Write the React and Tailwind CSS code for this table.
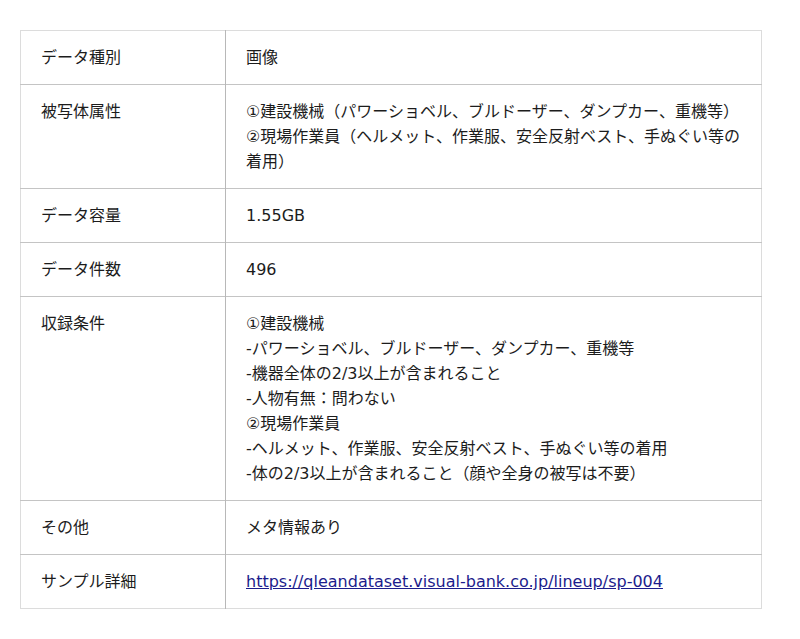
import React from "react";

const rows = [
  { label: "データ種別", value: ["画像"] },
  {
    label: "被写体属性",
    value: [
      "①建設機械（パワーショベル、ブルドーザー、ダンプカー、重機等）",
      "②現場作業員（ヘルメット、作業服、安全反射ベスト、手ぬぐい等の着用）",
    ],
  },
  { label: "データ容量", value: ["1.55GB"] },
  { label: "データ件数", value: ["496"] },
  {
    label: "収録条件",
    value: [
      "①建設機械",
      "-パワーショベル、ブルドーザー、ダンプカー、重機等",
      "-機器全体の2/3以上が含まれること",
      "-人物有無：問わない",
      "②現場作業員",
      "-ヘルメット、作業服、安全反射ベスト、手ぬぐい等の着用",
      "-体の2/3以上が含まれること（顔や全身の被写は不要）",
    ],
  },
  { label: "その他", value: ["メタ情報あり"] },
];

const App = () => {
  return (
    <div
      className="bg-white min-h-[639px] pt-[30px] pl-[20px] text-[#1c1c1c] text-[16px] leading-[25px]"
      style={{ fontFamily: '"DejaVu Sans", "Noto Sans CJK JP", sans-serif' }}
    >
      <table className="w-[742px] border-collapse border border-[#dcdcdc]">
        <tbody>
          {rows.map((row) => (
            <tr key={row.label} className="border-b border-[#c4c4c4]">
              <td className="w-[205px] align-top px-[20px] py-[14px] border-r border-[#b8b8b8]">
                {row.label}
              </td>
              <td className="align-top px-[20px] py-[14px]">
                {row.value.map((line, i) => (
                  <div key={i}>{line}</div>
                ))}
              </td>
            </tr>
          ))}
          <tr>
            <td className="w-[205px] align-top px-[20px] py-[14px] border-r border-[#b8b8b8]">
              サンプル詳細
            </td>
            <td className="align-top px-[20px] py-[14px]">
              <a href="#" className="text-[#1c1c8c] underline">
                https://qleandataset.visual-bank.co.jp/lineup/sp-004
              </a>
            </td>
          </tr>
        </tbody>
      </table>
    </div>
  );
};

export default App;
